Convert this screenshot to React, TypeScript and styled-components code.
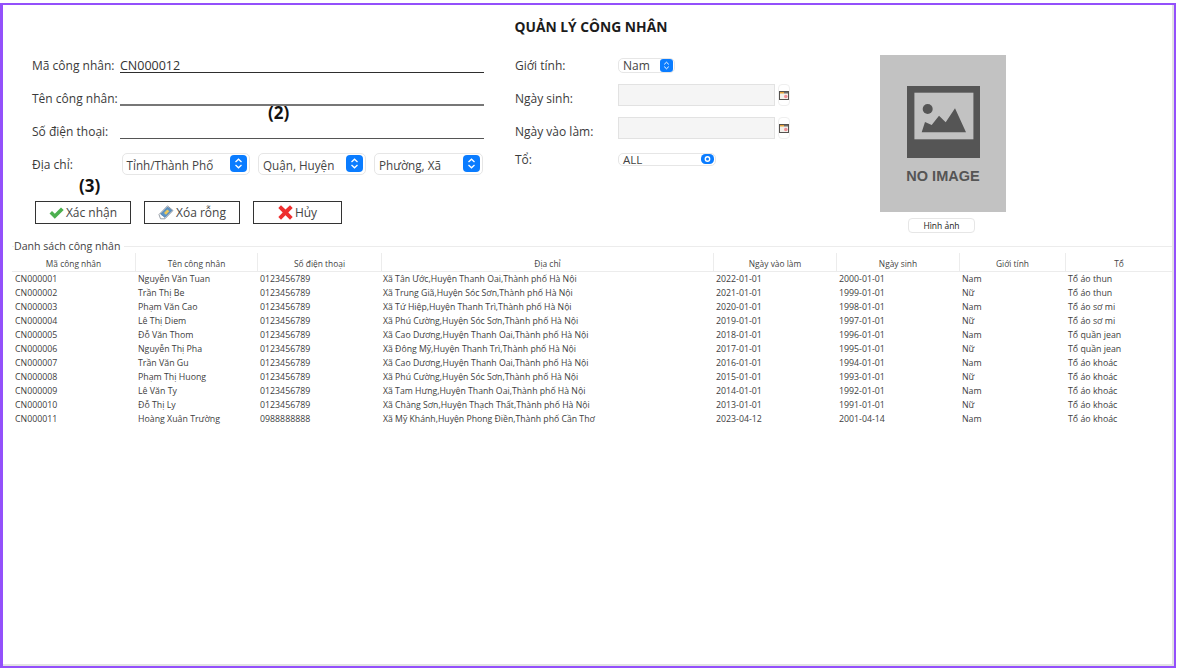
import React from "react";
import styled, { createGlobalStyle } from "styled-components";

const GlobalStyle = createGlobalStyle`
  html, body {
    margin: 0;
    padding: 0;
    background: #fff;
  }
  body {
    font-family: "Open Sans", "Noto Sans", "Liberation Sans", sans-serif;
    color: #333;
  }
`;

const workers = [
  ["CN000001", "Nguyễn Văn Tuan", "0123456789", "Xã Tân Ước,Huyện Thanh Oai,Thành phố Hà Nội", "2022-01-01", "2000-01-01", "Nam", "Tổ áo thun"],
  ["CN000002", "Trần Thị Be", "0123456789", "Xã Trung Giã,Huyện Sóc Sơn,Thành phố Hà Nội", "2021-01-01", "1999-01-01", "Nữ", "Tổ áo thun"],
  ["CN000003", "Phạm Văn Cao", "0123456789", "Xã Tứ Hiệp,Huyện Thanh Trì,Thành phố Hà Nội", "2020-01-01", "1998-01-01", "Nam", "Tổ áo sơ mi"],
  ["CN000004", "Lê Thị Diem", "0123456789", "Xã Phú Cường,Huyện Sóc Sơn,Thành phố Hà Nội", "2019-01-01", "1997-01-01", "Nữ", "Tổ áo sơ mi"],
  ["CN000005", "Đỗ Văn Thom", "0123456789", "Xã Cao Dương,Huyện Thanh Oai,Thành phố Hà Nội", "2018-01-01", "1996-01-01", "Nam", "Tổ quần jean"],
  ["CN000006", "Nguyễn Thị Pha", "0123456789", "Xã Đông Mỹ,Huyện Thanh Trì,Thành phố Hà Nội", "2017-01-01", "1995-01-01", "Nữ", "Tổ quần jean"],
  ["CN000007", "Trần Văn Gu", "0123456789", "Xã Cao Dương,Huyện Thanh Oai,Thành phố Hà Nội", "2016-01-01", "1994-01-01", "Nam", "Tổ áo khoác"],
  ["CN000008", "Phạm Thị Huong", "0123456789", "Xã Phú Cường,Huyện Sóc Sơn,Thành phố Hà Nội", "2015-01-01", "1993-01-01", "Nữ", "Tổ áo khoác"],
  ["CN000009", "Lê Văn Ty", "0123456789", "Xã Tam Hưng,Huyện Thanh Oai,Thành phố Hà Nội", "2014-01-01", "1992-01-01", "Nam", "Tổ áo khoác"],
  ["CN000010", "Đỗ Thị Ly", "0123456789", "Xã Chàng Sơn,Huyện Thạch Thất,Thành phố Hà Nội", "2013-01-01", "1991-01-01", "Nữ", "Tổ áo khoác"],
  ["CN000011", "Hoàng Xuân Trường", "0988888888", "Xã Mỹ Khánh,Huyện Phong Điền,Thành phố Cần Thơ", "2023-04-12", "2001-04-14", "Nam", "Tổ áo khoác"],
];

const headers = ["Mã công nhân", "Tên công nhân", "Số điện thoại", "Địa chỉ", "Ngày vào làm", "Ngày sinh", "Giới tính", "Tổ"];

const StepperIcon = ({ size = 17 }: { size?: number }) => (
  <svg width={size} height={size} viewBox="0 0 17 17">
    <rect width="17" height="17" rx="4" fill="#0a7cff" />
    <path d="M5.5 7 8.5 4.200 11.500 7M5.5 10 8.5 12.800 11.500 10" fill="none" stroke="#fff" strokeWidth="1.300" />
  </svg>
);

const DotIcon = () => (
  <svg width="13" height="10" viewBox="0 0 13 10">
    <rect width="13" height="10" rx="4.500" fill="#0a7cff" />
    <circle cx="6.500" cy="5" r="2.200" fill="none" stroke="#fff" strokeWidth="1.400" />
  </svg>
);

const CalendarIcon = () => (
  <svg width="10" height="9" viewBox="0 0 10 9">
    <rect x="0.500" y="0.500" width="9" height="8" fill="#f3f0ea" stroke="#55524f" />
    <rect x="1" y="1" width="4" height="1.500" fill="#e8a33a" />
    <rect x="5" y="1" width="4" height="1.500" fill="#6f6b68" />
    <circle cx="6.800" cy="5.500" r="1.800" fill="#ef8f95" />
  </svg>
);

const CheckIcon = () => (
  <svg width="15" height="12" viewBox="0 0 15 12">
    <path d="M.5 6.500 3 4 5.800 6.800 12 .5 14.700 3 5.800 11.800Z" fill="#4cb04f" />
  </svg>
);

const EraserIcon = () => (
  <svg width="16" height="15" viewBox="0 0 16 15">
    <path d="M1 9.500 9.500 .8 15 5.500 7 13.800 2.500 13.800Z" fill="#fff" stroke="#7d8791" strokeWidth="0.800" />
    <path d="M2.500 9 9.500 2 14 5.500 7 12.500Z" fill="#5b93c7" stroke="#3f6d99" strokeWidth="0.600" />
    <path d="M6 8 9.300 4.600 11.300 6.200 8 9.700Z" fill="#edc85a" />
  </svg>
);

const CrossIcon = () => (
  <svg width="15" height="15" viewBox="0 0 15 15">
    <path d="M.3 3 3 .3 7.500 4.600 12 .3 14.700 3 10.300 7.500 14.700 12 12 14.700 7.500 10.300 3 14.700 .3 12 4.700 7.500Z" fill="#ee2f2f" />
  </svg>
);

const NoImageGraphic = () => (
  <svg width="73" height="72" viewBox="0 0 73 72">
    <rect width="73" height="72" fill="#555" />
    <rect x="7.400" y="6.700" width="59" height="46.600" fill="#c2c2c2" />
    <circle cx="20.700" cy="23" r="5" fill="#555" />
    <path d="M14.700 46.300 18 36 24.700 39 32 29.700 38.700 36.300 48 22.300 59 46.300Z" fill="#555" />
  </svg>
);

const App = () => {
  return (
    <>
      <GlobalStyle />
      <Frame>
        <Title>QUẢN LÝ CÔNG NHÂN</Title>
        <TopSection>
          <LeftForm>
            <Annotation $left={236} $top={66}>(2)</Annotation>
            <Annotation $left={47} $top={139}>(3)</Annotation>
            <FormRow>
              <FieldLabel $width={88}>Mã công nhân:</FieldLabel>
              <LineInput $color="#2e2e2e">CN000012</LineInput>
            </FormRow>
            <FormRow>
              <FieldLabel $width={88}>Tên công nhân:</FieldLabel>
              <LineInput $color="#777" $thick />
            </FormRow>
            <FormRow>
              <FieldLabel $width={88}>Số điện thoại:</FieldLabel>
              <LineInput $color="#555" />
            </FormRow>
            <FormRow>
              <FieldLabel $width={89.5}>Địa chỉ:</FieldLabel>
              <SelectRow>
                <SelectBox $width={128.5}>
                  Tỉnh/Thành Phố
                  <StepperIcon />
                </SelectBox>
                <SelectBox $width={108}>
                  Quận, Huyện
                  <StepperIcon />
                </SelectBox>
                <SelectBox $width={109}>
                  Phường, Xã
                  <StepperIcon />
                </SelectBox>
              </SelectRow>
            </FormRow>
            <ButtonRow>
              <ActionButton $width={96}>
                <CheckIcon />
                Xác nhận
              </ActionButton>
              <ActionButton $width={96}>
                <EraserIcon />
                Xóa rỗng
              </ActionButton>
              <ActionButton $width={89}>
                <CrossIcon />
                Hủy
              </ActionButton>
            </ButtonRow>
          </LeftForm>
          <MiddleForm>
            <MiddleRow $height={33}>
              <FieldLabel $width={103}>Giới tính:</FieldLabel>
              <SmallSelect>
                Nam
                <StepperIcon size={13} />
              </SmallSelect>
            </MiddleRow>
            <MiddleRow $height={33}>
              <FieldLabel $width={103}>Ngày sinh:</FieldLabel>
              <DateField />
              <CalendarButton>
                <CalendarIcon />
              </CalendarButton>
            </MiddleRow>
            <MiddleRow $height={33}>
              <FieldLabel $width={103}>Ngày vào làm:</FieldLabel>
              <DateField />
              <CalendarButton>
                <CalendarIcon />
              </CalendarButton>
            </MiddleRow>
            <MiddleRow $height={22}>
              <FieldLabel $width={103}>Tổ:</FieldLabel>
              <TeamSelect>
                ALL
                <DotIcon />
              </TeamSelect>
            </MiddleRow>
          </MiddleForm>
          <ImageColumn>
            <ImagePlaceholder>
              <NoImageGraphic />
              <NoImageText>NO IMAGE</NoImageText>
            </ImagePlaceholder>
            <ImageButton>Hình ảnh</ImageButton>
          </ImageColumn>
        </TopSection>
        <ListBox>
          <ListLegend>Danh sách công nhân</ListLegend>
          <HeaderRow>
            {headers.map((h) => (
              <HeaderCell key={h}>{h}</HeaderCell>
            ))}
          </HeaderRow>
          {workers.map((row) => (
            <DataRow key={row[0]}>
              {row.map((cell, i) => (
                <DataCell key={i}>{cell}</DataCell>
              ))}
            </DataRow>
          ))}
        </ListBox>
      </Frame>
    </>
  );
};

export default App;

const Frame = styled.div`
  box-sizing: border-box;
  width: 1176px;
  height: 665px;
  margin-top: 3px;
  border: 2px solid #9350fb;
  border-left-width: 3px;
  box-shadow: inset -2px -2px 0 #e2e2e2;
  padding: 0 0 0 9px;
  overflow: hidden;
`;

const Title = styled.h1`
  margin: 0;
  padding: 12px 0 0 0;
  height: 32px;
  box-sizing: border-box;
  text-align: center;
  font-size: 13.8px;
  line-height: 20px;
  font-weight: 700;
  color: #1c1c1c;
  width: 1158px;
`;

const TopSection = styled.div`
  display: flex;
  align-items: flex-start;
  height: 200px;
  padding-left: 20px;
`;

const LeftForm = styled.div`
  position: relative;
  width: 452px;
  padding-top: 12px;
`;

const Annotation = styled.span<{ $left: number; $top: number }>`
  position: absolute;
  left: ${(p) => p.$left}px;
  top: ${(p) => p.$top}px;
  font-size: 17px;
  line-height: 20px;
  font-weight: 700;
  color: #111;
`;

const FormRow = styled.div`
  display: flex;
  align-items: center;
  height: 33px;
`;

const FieldLabel = styled.span<{ $width: number }>`
  flex: 0 0 ${(p) => p.$width}px;
  font-size: 12px;
  color: #3a3a3a;
  white-space: nowrap;
`;

const LineInput = styled.div<{ $color: string; $thick?: boolean }>`
  flex: 1;
  box-sizing: border-box;
  height: 14px;
  font-size: 12.5px;
  line-height: 13px;
  color: #333;
  border-bottom: ${(p) => (p.$thick ? 2 : 1)}px solid ${(p) => p.$color};
`;

const SelectRow = styled.div`
  display: flex;
  gap: 8px;
  margin-bottom: 2px;
`;

const SelectBox = styled.div<{ $width: number }>`
  box-sizing: border-box;
  width: ${(p) => p.$width}px;
  height: 22px;
  display: flex;
  align-items: center;
  justify-content: space-between;
  padding: 2px 2px 0 4px;
  border: 1px solid #e6e6e6;
  border-radius: 5px;
  background: #fff;
  font-size: 11.7px;
  color: #444;
  white-space: nowrap;
  svg {
    margin-top: -2px;
  }
`;

const ButtonRow = styled.div`
  display: flex;
  gap: 13px;
  margin: 20px 0 0 3px;
`;

const ActionButton = styled.button<{ $width: number }>`
  box-sizing: border-box;
  width: ${(p) => p.$width}px;
  height: 23px;
  display: flex;
  align-items: center;
  justify-content: center;
  gap: 2px;
  padding: 0;
  border: 1px solid #333;
  border-radius: 0;
  background: #fff;
  font-family: inherit;
  font-size: 12px;
  color: #444;
`;

const MiddleForm = styled.div`
  width: 365px;
  margin-left: 31px;
  padding-top: 12px;
`;

const MiddleRow = styled.div<{ $height: number }>`
  display: flex;
  align-items: center;
  height: ${(p) => p.$height}px;
`;

const SmallSelect = styled.div`
  box-sizing: border-box;
  width: 57px;
  height: 15px;
  margin-bottom: 1px;
  display: flex;
  align-items: center;
  justify-content: space-between;
  padding: 0 1px 0 4px;
  border: 1px solid #e6e6e6;
  border-radius: 5px;
  font-size: 12px;
  color: #444;
`;

const DateField = styled.div`
  box-sizing: border-box;
  width: 157px;
  height: 22px;
  margin-bottom: 7px;
  background: #f5f5f5;
  border: 1px solid #e2e2e2;
`;

const CalendarButton = styled.div`
  box-sizing: border-box;
  width: 12px;
  height: 22px;
  margin: 0 0 7px 3px;
  display: flex;
  align-items: center;
  justify-content: center;
  border: 1px solid #efefef;
  border-radius: 4px;
`;

const TeamSelect = styled.div`
  box-sizing: border-box;
  width: 98px;
  height: 13px;
  display: flex;
  align-items: center;
  justify-content: space-between;
  padding: 0 1px 0 4px;
  border: 1px solid #e6e6e6;
  border-radius: 5px;
  font-size: 11.5px;
  color: #444;
`;

const ImageColumn = styled.div`
  display: flex;
  flex-direction: column;
  align-items: flex-start;
  width: 126px;
  padding-top: 18px;
`;

const ImagePlaceholder = styled.div`
  box-sizing: border-box;
  width: 126px;
  height: 157px;
  padding-top: 31px;
  background: #c2c2c2;
  display: flex;
  flex-direction: column;
  align-items: center;
`;

const NoImageText = styled.span`
  margin-top: 8px;
  font-family: "Liberation Sans", Arial, sans-serif;
  font-size: 14.5px;
  line-height: 20px;
  font-weight: 700;
  color: #555;
`;

const ImageButton = styled.button`
  box-sizing: border-box;
  width: 67px;
  height: 15px;
  margin: 6px 0 0 28px;
  padding: 0;
  background: #fff;
  border: 1px solid #e6e6e6;
  border-radius: 4px;
  font-family: inherit;
  font-size: 8.5px;
  line-height: 12px;
  color: #222;
`;

const ListBox = styled.section`
  position: relative;
  width: 1160px;
  margin-top: 9px;
  padding-top: 6px;
  border-top: 1px solid #ececec;
`;

const ListLegend = styled.span`
  position: absolute;
  left: 2px;
  top: -8px;
  padding: 0 4px 0 0;
  background: #fff;
  font-size: 10.6px;
  line-height: 15px;
  color: #444;
`;

const columns = "124px 122px 124px 332px 123px 123px 106px 106px";

const HeaderRow = styled.div`
  display: grid;
  grid-template-columns: ${columns};
  height: 18px;
  border-bottom: 1px solid #ececec;
`;

const HeaderCell = styled.div`
  font-size: 8.4px;
  line-height: 21px;
  height: 18px;
  text-align: center;
  color: #444;
  border-right: 1px solid #ececec;
  &:last-child {
    border-right: 0;
  }
`;

const DataRow = styled.div`
  display: grid;
  grid-template-columns: ${columns};
  height: 14px;
`;

const DataCell = styled.div`
  padding-left: 2px;
  font-size: 8.8px;
  line-height: 14.5px;
  color: #404040;
  white-space: nowrap;
  overflow: hidden;
  &:first-child {
    padding-left: 3px;
  }
  &:nth-child(4) {
    padding-left: 1px;
    font-size: 8.7px;
  }
`;
